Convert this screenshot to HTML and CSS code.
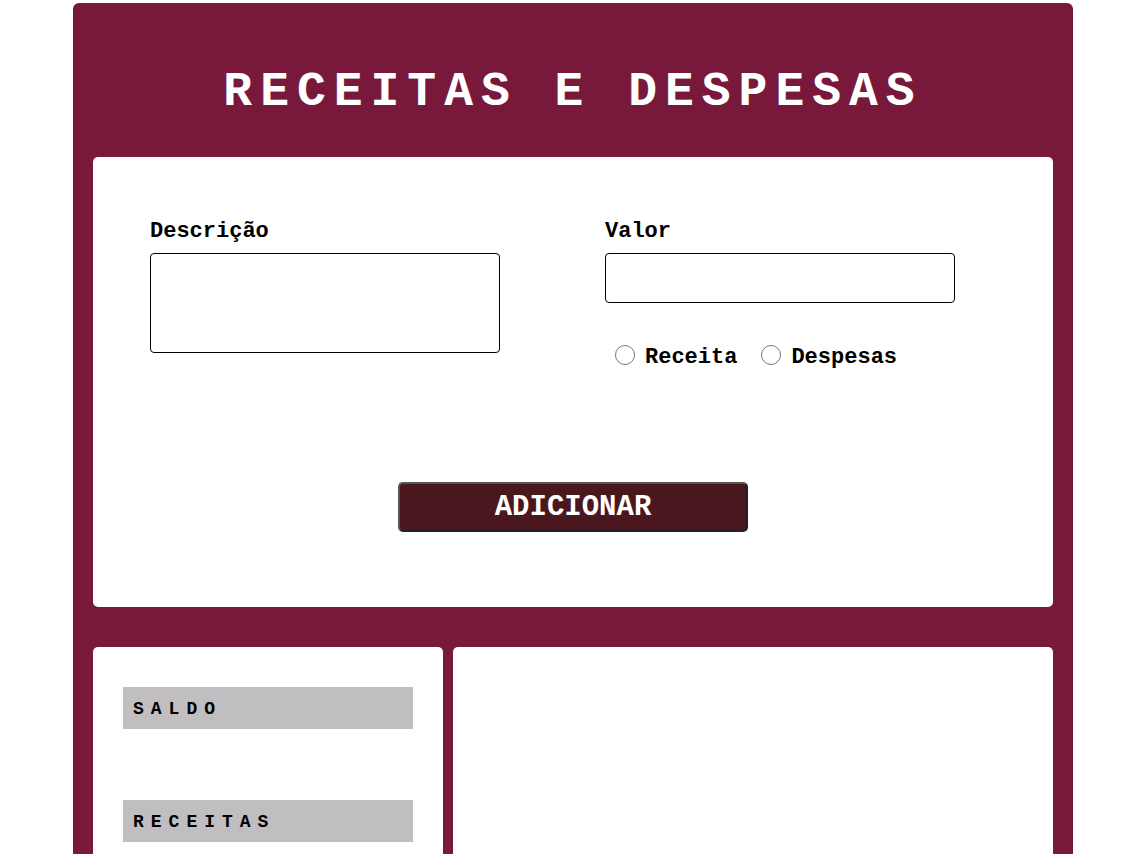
FILE: index.html
```html
<!DOCTYPE html>
<html lang="pt-BR">
<head>
<meta charset="utf-8">
<title>Receitas e Despesas</title>
<link rel="stylesheet" href="styles.css">
</head>
<body>
<main class="app">
  <h1 class="title">RECEITAS E DESPESAS</h1>
  <section class="form-card">
    <div class="fields">
      <div class="field">
        <label class="label" for="desc">Descrição</label>
        <textarea id="desc" class="textarea"></textarea>
      </div>
      <div class="field">
        <label class="label" for="valor">Valor</label>
        <input id="valor" class="input" type="text">
        <div class="radios">
          <label class="radio"><input type="radio" name="tipo" class="radio-input"><span>Receita</span></label>
          <label class="radio"><input type="radio" name="tipo" class="radio-input"><span>Despesas</span></label>
        </div>
      </div>
    </div>
    <div class="actions">
      <button class="btn" type="button">ADICIONAR</button>
    </div>
  </section>
  <div class="panels">
    <aside class="summary">
      <div class="sum-box">SALDO</div>
      <div class="sum-box">RECEITAS</div>
    </aside>
    <section class="list"></section>
  </div>
</main>
</body>
</html>
```
FILE: styles.css
```css
html, body {
  margin: 0;
  padding: 0;
  overflow: hidden;
  background: #ffffff;
}

body {
  font-family: "Courier New", "Liberation Mono", monospace;
  color: #000;
}

.app {
  width: 1000px;
  margin: 3px 0 0 73px;
  background: #78193b;
  border-radius: 6px;
  padding: 0 20px 0;
  box-sizing: border-box;
  height: 900px;
}

.title {
  margin: 0;
  padding: 62px 0 38px;
  line-height: 54px;
  font-size: 48px;
  font-weight: bold;
  letter-spacing: 8px;
  color: #fff;
  text-align: center;
}

.form-card {
  background: #fff;
  border-radius: 5px;
  height: 450px;
  box-sizing: border-box;
  padding: 61px 0 0 57px;
}

.fields {
  display: grid;
  grid-template-columns: 455px 455px;
}

.field {
  display: flex;
  flex-direction: column;
  align-items: flex-start;
}

.label {
  font-size: 22px;
  font-weight: bold;
  line-height: 28px;
  margin-bottom: 7px;
}

.textarea, .input {
  width: 350px;
  box-sizing: border-box;
  border: 1px solid #000;
  border-radius: 4px;
  margin: 0;
  resize: none;
  font-family: inherit;
}

.textarea { height: 100px; }
.input { height: 50px; }

.radios {
  display: flex;
  gap: 24px;
  margin-top: 42px;
  padding-left: 10px;
}

.radio {
  display: flex;
  align-items: center;
  gap: 10px;
  font-size: 22px;
  font-weight: bold;
  line-height: 26px;
}

.radio-input {
  appearance: none;
  -webkit-appearance: none;
  width: 20px;
  height: 20px;
  margin: 0;
  border: 1px solid #767676;
  border-radius: 50%;
  background: #fff;
  position: relative;
  top: -3px;
}

.actions {
  display: flex;
  justify-content: center;
  padding-right: 57px;
  margin-top: 111px;
}

.btn {
  width: 350px;
  height: 50px;
  background: #4b171e;
  color: #fff;
  border: 2px solid #222;
  border-top-color: #555;
  border-left-color: #555;
  border-radius: 5px;
  font-family: inherit;
  font-size: 29px;
  font-weight: bold;
}

.panels {
  display: flex;
  gap: 10px;
  margin-top: 40px;
}

.summary {
  width: 350px;
  background: #fff;
  border-radius: 5px;
  height: 400px;
  box-sizing: border-box;
  padding: 40px 30px;
  display: flex;
  flex-direction: column;
  gap: 71px;
}

.sum-box {
  width: 290px;
  height: 42px;
  background: #c0bec1;
  box-sizing: border-box;
  padding-left: 10px;
  padding-top: 2px;
  display: flex;
  align-items: center;
  font-size: 18px;
  font-weight: bold;
  letter-spacing: 7px;
}

.list {
  flex: 1;
  background: #fff;
  border-radius: 5px;
  height: 400px;
}
```
